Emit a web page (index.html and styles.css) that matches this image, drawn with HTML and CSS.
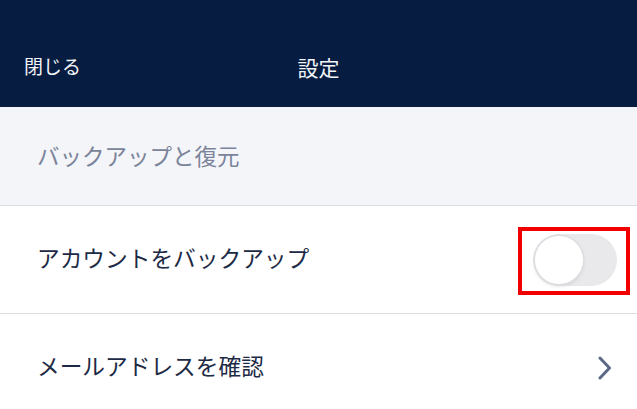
FILE: index.html
```html
<!DOCTYPE HTML>
<html lang="ja">
<head>
    <meta charset="UTF-8">
    <link rel="stylesheet" href="styles.css">
    <title>設定</title>
</head>
<body>
<div class="header">
    <span class="close">閉じる</span>
    <span class="title">設定</span>
    <span></span>
</div>
<div class="section">バックアップと復元</div>
<div class="row">
    <span class="label">アカウントをバックアップ</span>
    <div class="mark">
        <div class="toggle"><div class="knob"></div></div>
    </div>
</div>
<div class="row">
    <span class="label">メールアドレスを確認</span>
    <svg class="chevron" width="16" height="24" viewBox="0 0 16 24">
        <path d="M3 2 L12.5 12 L3 22" fill="none" stroke="#5b6987" stroke-width="3" stroke-linecap="round" stroke-linejoin="round"/>
    </svg>
</div>
</body>
</html>
```
FILE: styles.css
```css
* {
    box-sizing: border-box;
}

body {
    margin: 0;
    font-family: "Noto Sans CJK JP", "Noto Sans", sans-serif;
    background: #fff;
}

.header {
    height: 107px;
    background: #061c40;
    color: #f2f4f8;
    display: grid;
    grid-template-columns: 1fr auto 1fr;
    align-items: center;
    padding: 24px 24px 0;
}

.close {
    font-size: 19px;
    line-height: 24px;
}

.title {
    font-size: 21px;
    line-height: 26px;
    padding-top: 2px;
}

.section {
    height: 99px;
    background: #f4f5f9;
    border-bottom: 1px solid #dcdde0;
    color: #7b8499;
    font-size: 22.5px;
    line-height: 28px;
    padding: 34px 37px 0;
}

.row {
    height: 108px;
    display: flex;
    align-items: center;
    justify-content: space-between;
    padding: 0 24px 0 37px;
    border-bottom: 1px solid #dcdde0;
    color: #1d2a45;
    font-size: 22.7px;
}

.label {
    margin-bottom: 4px;
}

.mark {
    border: 4px solid #f20000;
    padding: 3px 9px 5px 11px;
    margin-right: -17px;
    margin-top: 2px;
}

.toggle {
    width: 84px;
    height: 52px;
    border-radius: 26px;
    background: #e9e9ec;
    padding: 2px;
}

.knob {
    width: 48px;
    height: 48px;
    border-radius: 50%;
    background: #fff;
    box-shadow: 0 0 0 1.5px #dedee2, 0 2px 4px rgba(0, 0, 0, 0.12);
}

.chevron {
    margin-top: 0;
}
```
